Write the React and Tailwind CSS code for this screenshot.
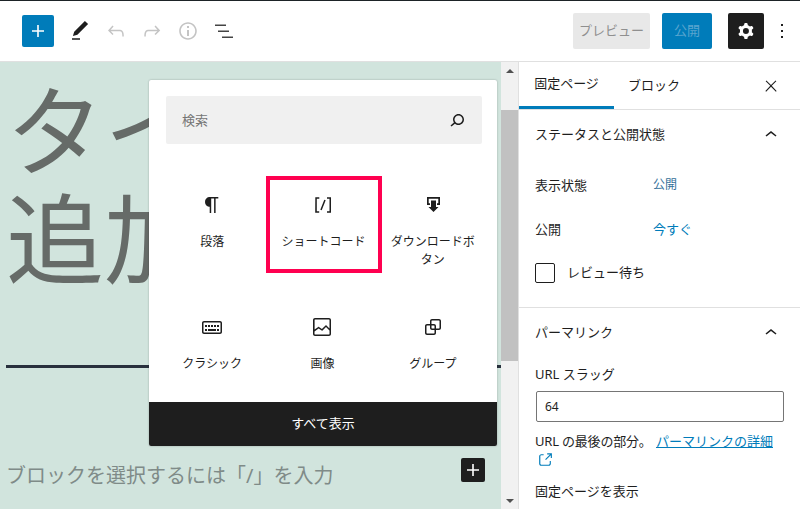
import React from "react";

const font = "font-['Noto_Sans','Noto_Sans_CJK_JP',sans-serif]";

const Icon = ({ d, size = 24, className = "" }) => (
  <svg viewBox="0 0 24 24" width={size} height={size} fill="currentColor" className={className}>
    <path d={d} fillRule="evenodd" clipRule="evenodd" />
  </svg>
);

const icons = {
  plus: "M18 11.2h-5.2V6h-1.6v5.2H6v1.6h5.2V18h1.6v-5.2H18z",
  pen: "M20.1 5.1L16.9 2 6.2 12.7l-1.3 4.4 4.5-1.3L20.1 5.1zM4 20.8h8v-1.5H4v1.5z",
  undo: "M18.3 11.7c-.6-.6-1.4-.9-2.3-.9H6.7l2.9-3.3-1.1-1-4.5 5L8.5 16l1-1-2.7-2.7H16c.5 0 .9.2 1.3.5 1 1 1 3.4 1 4.5v.3h1.5v-.2c0-1.5 0-4.3-1.5-5.7z",
  redo: "M15.6 6.5l-1.1 1 2.9 3.3H8c-.9 0-1.7.3-2.3.9-1.4 1.5-1.4 4.2-1.4 5.6v.2h1.5v-.3c0-1.1 0-3.5 1-4.5.3-.3.7-.5 1.3-.5h9.2L14.5 15l1.1 1.1 4.6-4.6-4.6-5z",
  info: "M12 3.2c-4.8 0-8.8 3.9-8.8 8.8 0 4.8 3.9 8.8 8.8 8.8 4.8 0 8.8-3.9 8.8-8.8 0-4.8-4-8.8-8.8-8.8zm0 16c-4 0-7.2-3.3-7.2-7.2C4.8 8 8 4.8 12 4.8s7.2 3.3 7.2 7.2c0 4-3.2 7.2-7.2 7.2zM11 17h2v-6h-2v6zm0-8h2V7h-2v2z",
  list: "M3 5.5h11V7H3zM6 11.5h11V13H6zM10 17.5h11V19H10z",
  cog: "M10.289 4.836A1 1 0 0111.275 4h1.306a1 1 0 01.987.836l.244 1.466c.787.26 1.503.679 2.108 1.218l1.393-.522a1 1 0 011.216.437l.653 1.13a1 1 0 01-.23 1.273l-1.148.944a6.025 6.025 0 010 2.435l1.149.946a1 1 0 01.23 1.272l-.653 1.13a1 1 0 01-1.216.437l-1.394-.522c-.605.54-1.32.958-2.108 1.218l-.244 1.466a1 1 0 01-.987.836h-1.306a1 1 0 01-.986-.836l-.244-1.466a5.995 5.995 0 01-2.108-1.218l-1.394.522a1 1 0 01-1.217-.436l-.653-1.131a1 1 0 01.23-1.272l1.149-.946a6.026 6.026 0 010-2.435l-1.148-.944a1 1 0 01-.23-1.272l.653-1.131a1 1 0 011.217-.437l1.393.522a5.994 5.994 0 012.108-1.218l.244-1.466zM14.929 12a3 3 0 11-6 0 3 3 0 016 0z",
  more: "M13 19h-2v-2h2v2zm0-6h-2v-2h2v2zm0-6h-2V5h2v2z",
  close: "M13 11.8l6.1-6.3-1-1-6.1 6.2-6.1-6.2-1 1 6.1 6.3-6.5 6.7 1 1 6.5-6.6 6.5 6.6 1-1z",
  chevron: "M6.5 12.4L12 8l5.5 4.4-.9 1.2L12 10l-4.5 3.6-1-1.2z",
  search: "M13.5 6C10.5 6 8 8.5 8 11.5c0 1.1.3 2.1.9 3l-3.4 3 1 1.1 3.4-2.9c1 .9 2.2 1.4 3.6 1.4 3 0 5.5-2.5 5.5-5.5C19 8.5 16.5 6 13.5 6zm0 9.5c-2.2 0-4-1.8-4-4s1.8-4 4-4 4 1.8 4 4-1.8 4-4 4z",
  paragraph: "M18.3 4H9.9v-.1l-.9.2c-2.3.4-4 2.4-4 4.8s1.7 4.4 4 4.8l.7.1V20h1.5V5.5h2.9V20h1.5V5.5h2.7V4z",
  shortcode: "M16 4.2v1.5h2.5v12.5H16v1.5h4V4.2h-4zM4.2 19.8h4v-1.5H5.8V5.8h2.5V4.2h-4l-.1 15.6zm5.1-3.1l1.4.6 4-10-1.4-.6-4 10z",
  download: "M6 4h13v8h-3v-1.7h1.3V5.7H7.7v4.6H9V12H6zM10 7.5h5V14h2.5l-5 5-5-5H10z",
  classic: "M20 6H4c-1.1 0-2 .9-2 2v9c0 1.1.9 2 2 2h16c1.1 0 2-.9 2-2V8c0-1.1-.9-2-2-2zm.5 11c0 .3-.2.5-.5.5H4c-.3 0-.5-.2-.5-.5V8c0-.3.2-.5.5-.5h16c.3 0 .5.2.5.5v9zM10 10H8v2h2v-2zm-5 2h2v-2H5v2zm8-2h-2v2h2v-2zm-5 6h8v-2H8v2zm6-4h2v-2h-2v2zm3 0h2v-2h-2v2zm0 4h2v-2h-2v2zM5 16h2v-2H5v2z",
  image: "M19 3H5c-1.1 0-2 .9-2 2v14c0 1.1.9 2 2 2h14c1.1 0 2-.9 2-2V5c0-1.1-.9-2-2-2zM5 4.5h14c.3 0 .5.2.5.5v8.4l-3-2.9c-.3-.3-.8-.3-1 0L11.9 14 9 12c-.3-.2-.6-.2-.8 0l-3.6 2.6V5c-.1-.3.1-.5.4-.5zm14 15H5c-.3 0-.5-.2-.5-.5v-2.4l4.1-3 3 1.9c.3.2.7.2.9-.1L16 12l3.5 3.4V19c0 .3-.2.5-.5.5z",
  group: "M18 4h-7c-1.1 0-2 .9-2 2v3H6c-1.1 0-2 .9-2 2v7c0 1.1.9 2 2 2h7c1.1 0 2-.9 2-2v-3h3c1.1 0 2-.9 2-2V6c0-1.1-.9-2-2-2zm-4.5 14c0 .3-.2.5-.5.5H6c-.3 0-.5-.2-.5-.5v-7c0-.3.2-.5.5-.5h3V13c0 1.1.9 2 2 2h2.5v3zm0-4.5H11c-.3 0-.5-.2-.5-.5v-2.5H13c.3 0 .5.2.5.5v2.5zm5-.5c0 .3-.2.5-.5.5h-3V11c0-1.1-.9-2-2-2h-2.5V6c0-.3.2-.5.5-.5h7c.3 0 .5.2.5.5v7z",
  external: "M18.2 17c0 .7-.6 1.2-1.2 1.2H7c-.7 0-1.2-.6-1.2-1.2V7c0-.7.6-1.2 1.2-1.2h3.2V4.2H7C5.5 4.2 4.2 5.5 4.2 7v10c0 1.5 1.2 2.8 2.8 2.8h10c1.5 0 2.8-1.2 2.8-2.8v-3.6h-1.5V17zM14.9 3v1.5h3.7l-6.4 6.4 1.1 1.1 6.4-6.4v3.7h1.5V3h-6.8z",
};

const blocks = [
  { name: "段落", icon: icons.paragraph },
  { name: "ショートコード", icon: icons.shortcode, active: true },
  { name: "ダウンロードボタン", icon: icons.download },
  { name: "クラシック", icon: icons.classic },
  { name: "画像", icon: icons.image },
  { name: "グループ", icon: icons.group },
];

const Header = () => (
  <header className="h-[62px] shrink-0 flex items-center bg-white border-t border-t-[#1d2327] border-b border-b-[#e0e0e0] pl-[22px] pr-[6px]">
    <button className="w-8 h-8 rounded-[2px] bg-[#007cba] text-white flex items-center justify-center">
      <Icon d={icons.plus} />
    </button>
    <div className="flex items-center ml-[14px] gap-3">
      <Icon d={icons.pen} className="text-[#1e1e1e]" />
      <Icon d={icons.undo} className="text-[#c4c4c4]" />
      <Icon d={icons.redo} className="text-[#c4c4c4]" />
      <Icon d={icons.info} className="text-[#c4c4c4]" />
      <Icon d={icons.list} className="text-[#444444]" />
    </div>
    <div className="ml-auto flex items-center">
      <button className="w-[77px] h-9 rounded-[2px] bg-[#e8e8e8] text-[#8f8f8f] text-[13px]">プレビュー</button>
      <button className="w-[50px] h-9 ml-3 rounded-[2px] bg-[#007cba] text-[#5aa5cf] text-[13px]">公開</button>
      <button className="w-9 h-9 ml-4 rounded-[2px] bg-[#1e1e1e] text-white flex items-center justify-center">
        <Icon d={icons.cog} />
      </button>
      <Icon d={icons.more} className="ml-[6px] text-[#1e1e1e]" />
    </div>
  </header>
);

const Inserter = () => (
  <div className="absolute left-[149px] top-[18px] w-[348px] h-[366px] bg-white shadow-[0_0_2px_rgba(0,0,0,0.3)] rounded-[2px] flex flex-col">
    <div className="ml-[17px] w-[316px] mt-4 h-12 shrink-0 bg-[#f0f0f0] rounded-[2px] flex items-center justify-between pl-4 pr-[13px]">
      <span className="text-[13px] text-[#757575] pt-px">検索</span>
      <Icon d={icons.search} className="text-[#1e1e1e]" />
    </div>
    <div className="flex-1 grid grid-cols-3 grid-rows-[97px_97px] content-start gap-y-[25px] ml-[8px] mr-[9px] mt-8 text-[#1e1e1e]">
      {blocks.map((b) => (
        <div
          key={b.name}
          className={`flex flex-col items-center text-center text-[12px] leading-[18px] ${b.active ? "border-4 border-[#ff0050] -ml-[1px] -mr-[4px] pl-[7px] pr-[8px] pt-[13px]" : "px-3 pt-[17px]"}`}
        >
          <Icon d={b.icon} />
          <span className="mt-4">{b.name}</span>
        </div>
      ))}
    </div>
    <div className="h-11 shrink-0 bg-[#1e1e1e] text-white text-[13px] flex items-center justify-center rounded-b-[2px]">
      すべて表示
    </div>
  </div>
);

const Editor = () => (
  <main className="relative flex-1 min-w-0 bg-[#d1e4dd] overflow-hidden flex flex-col pl-[6px]">
    <h1 className="text-[98px] leading-[108px] font-normal text-[#666b68] pt-[14px]">タイトルを追加</h1>
    <div className="h-[3px] mt-[73px] bg-[#28303d]" />
    <div className="mt-[93px] flex items-center justify-between pr-4">
      <p className="text-[20px] text-[#7f8b88] leading-[30px]">ブロックを選択するには「/」を入力</p>
      <button className="w-6 h-6 -mt-[12px] rounded-[2px] bg-[#1e1e1e] text-white flex items-center justify-center">
        <Icon d={icons.plus} />
      </button>
    </div>
    <Inserter />
  </main>
);

const Scrollbar = () => (
  <div className="w-[17px] shrink-0 bg-[#f1f1f1] flex flex-col items-center">
    <div className="h-[17px] shrink-0 flex items-center justify-center">
      <div className="w-0 h-0 border-x-[4px] border-x-transparent border-b-[4px] border-b-[#505050]" />
    </div>
    <div className="w-full h-[251px] mt-[31px] bg-[#c1c1c1]" />
    <div className="mt-auto h-[17px] shrink-0 flex items-center justify-center">
      <div className="w-0 h-0 border-x-[4px] border-x-transparent border-t-[4px] border-t-[#505050]" />
    </div>
  </div>
);

const Section = ({ title, children, className = "" }) => (
  <section className={`px-4 border-b border-[#e0e0e0] ${className}`}>
    <div className="h-[50px] flex items-center justify-between">
      <h2 className="text-[13px] font-normal text-[#1e1e1e]">{title}</h2>
      <Icon d={icons.chevron} className="mr-[1px] text-[#1e1e1e]" />
    </div>
    {children}
  </section>
);

const Sidebar = () => (
  <aside className="w-[282px] shrink-0 bg-white border-l border-[#e0e0e0] flex flex-col overflow-hidden text-[13px] text-[#1e1e1e]">
    <div className="h-12 shrink-0 flex items-center border-b border-[#e0e0e0] pr-[20px]">
      <div className="h-full w-[95px] flex items-center justify-center border-b-[3px] border-[#007cba]">固定ページ</div>
      <div className="ml-[14px]">ブロック</div>
      <Icon d={icons.close} className="ml-auto" size={18} />
    </div>
    <Section title="ステータスと公開状態" className="h-[198px] shrink-0">
      <div className="grid grid-cols-[118px_1fr] gap-y-[22px] mt-[14px] leading-[22px]">
        <span>表示状態</span>
        <span className="text-[12px] text-[#35719a]">公開</span>
        <span>公開</span>
        <span className="text-[#007cba]">今すぐ</span>
      </div>
      <label className="flex items-center gap-3 mt-[23px]">
        <span className="w-5 h-5 border border-[#1e1e1e] rounded-[2px]" />
        レビュー待ち
      </label>
    </Section>
    <Section title="パーマリンク" className="shrink-0 pb-4">
      <div className="mt-[6px] leading-5">URL スラッグ</div>
      <div className="mt-[7px] ml-px h-[31px] border border-[#757575] rounded-[2px] flex items-center px-2 text-[12px]">64</div>
      <p className="mt-[9px] text-[13px] leading-[20px]">
        <span className="tracking-[-0.2px]">URL の最後の部分。</span> <span className="text-[#007cba] underline ml-px">パーマリンクの詳細</span>
      </p>
      <Icon d={icons.external} size={18} className="block text-[#007cba] ml-[1px]" />
      <div className="mt-3 leading-5">固定ページを表示</div>
    </Section>
  </aside>
);

export default function App() {
  return (
    <div className={`w-[800px] h-[509px] overflow-hidden flex flex-col bg-white ${font}`}>
      <Header />
      <div className="flex-1 min-h-0 flex">
        <Editor />
        <Scrollbar />
        <Sidebar />
      </div>
    </div>
  );
}
